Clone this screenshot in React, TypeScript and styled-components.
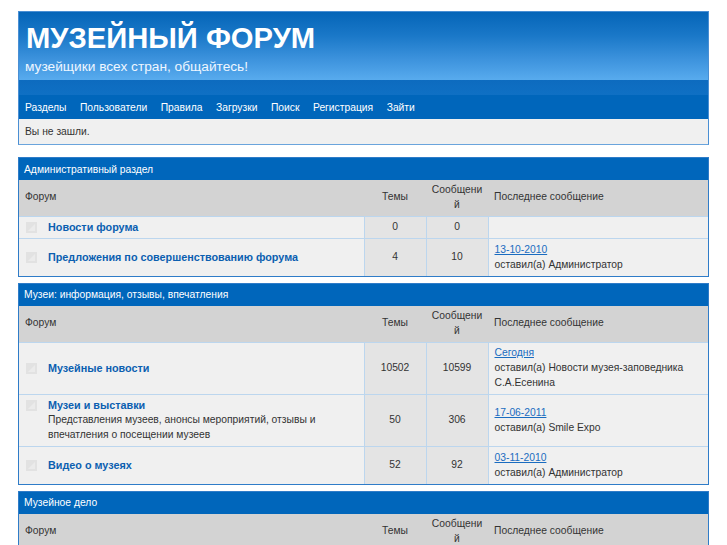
import React from 'react';
import styled, { createGlobalStyle } from 'styled-components';

const blue = '#0066bb';
const divider = '#bcd6ee';

interface Forum {
    name: string;
    desc?: string;
    topics: string;
    posts: string;
    last?: { date: string; by: string };
}

interface Category {
    title: string;
    forums: Forum[];
}

const categories: Category[] = [
    {
        title: 'Административный раздел',
        forums: [
            { name: 'Новости форума', topics: '0', posts: '0' },
            {
                name: 'Предложения по совершенствованию форума',
                topics: '4',
                posts: '10',
                last: { date: '13-10-2010', by: 'Администратор' },
            },
        ],
    },
    {
        title: 'Музеи: информация, отзывы, впечатления',
        forums: [
            {
                name: 'Музейные новости',
                topics: '10502',
                posts: '10599',
                last: { date: 'Сегодня', by: 'Новости музея-заповедника С.А.Есенина' },
            },
            {
                name: 'Музеи и выставки',
                desc: 'Представления музеев, анонсы мероприятий, отзывы и впечатления о посещении музеев',
                topics: '50',
                posts: '306',
                last: { date: '17-06-2011', by: 'Smile Expo' },
            },
            {
                name: 'Видео о музеях',
                topics: '52',
                posts: '92',
                last: { date: '03-11-2010', by: 'Администратор' },
            },
        ],
    },
    {
        title: 'Музейное дело',
        forums: [],
    },
];

const navItems = ['Разделы', 'Пользователи', 'Правила', 'Загрузки', 'Поиск', 'Регистрация', 'Зайти'];

const ForumIcon: React.FC = () => (
    <IconBox width='11' height='11' viewBox='0 0 11 11'>
        <rect x='0' y='0' width='11' height='11' fill='#e2e2e2' />
        <path d='M2 9 L9 2 L9 9 Z' fill='#ebebeb' />
    </IconBox>
);

const App: React.FC = () => {
    return (
        <Page>
            <GlobalStyle />
            <Header>
                <Banner>
                    <Title>МУЗЕЙНЫЙ ФОРУМ</Title>
                    <Tagline>музейщики всех стран, общайтесь!</Tagline>
                </Banner>
                <Band />
                <Nav>
                    {navItems.map((item) => (
                        <NavLink key={item} href='#'>
                            {item}
                        </NavLink>
                    ))}
                </Nav>
                <Status>Вы не зашли.</Status>
            </Header>

            {categories.map((cat) => (
                <Section key={cat.title}>
                    <Caption>{cat.title}</Caption>
                    <Table>
                        <colgroup>
                            <col />
                            <col width='62' />
                            <col width='62' />
                            <col width='220' />
                        </colgroup>
                        <thead>
                            <tr>
                                <HeadCell>Форум</HeadCell>
                                <HeadCell $center>Темы</HeadCell>
                                <HeadCell $center $breakAll>
                                    Сообщений
                                </HeadCell>
                                <HeadCell>Последнее сообщение</HeadCell>
                            </tr>
                        </thead>
                        <tbody>
                            {cat.forums.map((f) => (
                                <tr key={f.name}>
                                    <ForumCell>
                                        <ForumRow>
                                            <ForumIcon />
                                            <ForumInfo>
                                                <ForumName href='#'>{f.name}</ForumName>
                                                {f.desc && <ForumDesc>{f.desc}</ForumDesc>}
                                            </ForumInfo>
                                        </ForumRow>
                                    </ForumCell>
                                    <CountCell>{f.topics}</CountCell>
                                    <CountCell>{f.posts}</CountCell>
                                    <LastCell>
                                        {f.last && (
                                            <>
                                                <DateLink href='#'>{f.last.date}</DateLink>
                                                <br />
                                                оставил(а) {f.last.by}
                                            </>
                                        )}
                                    </LastCell>
                                </tr>
                            ))}
                        </tbody>
                    </Table>
                </Section>
            ))}
        </Page>
    );
};

export default App;

const GlobalStyle = createGlobalStyle`
    body {
        margin: 0;
        background: #fff;
        color: #333;
        font-family: 'Liberation Sans', Arial, sans-serif;
        font-size: 10.3px;
    }
`;

const Page = styled.div`
    padding: 11px 18px 0;
`;

const Header = styled.header`
    border: 1px solid #4a8fd4;
    border-bottom-color: #6aa4dc;
`;

const Banner = styled.div`
    height: 68px;
    box-sizing: border-box;
    padding: 9px 6px 0;
    background: linear-gradient(to bottom, #0565b8 0%, #1a78c8 35%, #3d93dd 70%, #58abee 100%);
    color: #fff;
`;

const Title = styled.h1`
    margin: 0;
    font-size: 29.2px;
    font-weight: bold;
    line-height: 34px;
    padding-left: 1px;
`;

const Tagline = styled.div`
    margin-top: 4px;
    font-size: 13.7px;
    line-height: 16px;
    color: #eef6ff;
`;

const Band = styled.div`
    height: 15px;
    background: linear-gradient(to bottom, #0d6bbf, #0f70c4);
`;

const Nav = styled.nav`
    display: flex;
    align-items: center;
    gap: 13.5px;
    height: 24px;
    padding: 0 6px;
    background: ${blue};
`;

const NavLink = styled.a`
    color: #fff;
    text-decoration: none;
`;

const Status = styled.div`
    height: 25px;
    display: flex;
    align-items: center;
    padding: 0 6px;
    background: #f0f0f0;
    color: #333;
`;

const Section = styled.section`
    margin-top: 6px;
    border: 1px solid #2f7cc8;

    &:first-of-type {
        margin-top: 12px;
    }
`;

const Caption = styled.div`
    height: 22px;
    display: flex;
    align-items: center;
    padding: 0 5px;
    background: ${blue};
    color: #fff;
`;

const Table = styled.table`
    width: 100%;
    border-collapse: collapse;
    table-layout: fixed;
    line-height: 14.8px;
    font-size: 10.3px;
`;

const HeadCell = styled.th<{ $center?: boolean; $breakAll?: boolean }>`
    background: #d3d3d3;
    font-weight: normal;
    color: #333;
    padding: ${(p) => (p.$breakAll ? '3px 4.5px' : '3px 6px')};
    text-align: ${(p) => (p.$center ? 'center' : 'left')};
    word-break: ${(p) => (p.$breakAll ? 'break-all' : 'normal')};
    border-bottom: 1px solid ${divider};
`;

const BodyCell = styled.td`
    padding: 3.5px 6px;
    border-top: 1px solid ${divider};
    vertical-align: middle;
`;

const ForumCell = styled(BodyCell)`
    background: #f0f0f0;
    padding-left: 7px;
`;

const ForumRow = styled.div`
    display: flex;
    align-items: flex-start;
    gap: 11px;
`;

const IconBox = styled.svg`
    flex: none;
    margin-top: 2px;
`;

const ForumInfo = styled.div`
    display: flex;
    flex-direction: column;
`;

const ForumName = styled.a`
    color: #0b5fb0;
    font-weight: bold;
    font-size: 10.8px;
    text-decoration: none;
`;

const ForumDesc = styled.span`
    color: #333;
`;

const CountCell = styled(BodyCell)`
    background: #e4e4e4;
    text-align: center;
    border-left: 1px solid ${divider};
`;

const LastCell = styled(BodyCell)`
    background: #f0f0f0;
    border-left: 1px solid ${divider};
`;

const DateLink = styled.a`
    color: #1a6cc0;
    text-decoration: underline;
`;
